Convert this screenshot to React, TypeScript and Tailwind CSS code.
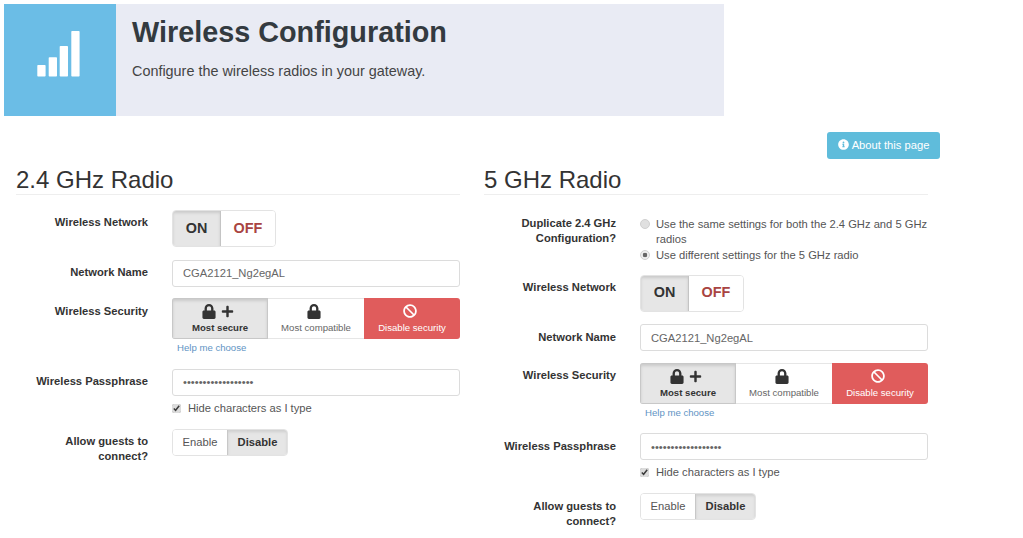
import { FaBan, FaInfoCircle, FaLock, FaPlus } from "react-icons/fa";

const Label = ({ children }: { children: React.ReactNode }) => (
  <label className="w-[132px] shrink-0 pt-[5.4px] text-right text-[11.2px] leading-[15px] font-bold text-[#333]">
    {children}
  </label>
);

const TextField = ({ value, type = "text" }: { value: string; type?: string }) => (
  <input
    type={type}
    value={value}
    readOnly
    className="h-[27px] w-[288px] rounded-[3px] border border-[#dcdcdc] bg-white px-[10px] text-[11.2px] text-[#666] outline-none"
  />
);

const RadioForm = ({ children }: { children?: React.ReactNode }) => (
  <form>
    {children}

    {/* on / off */}
    <div className="flex gap-6">
      <Label>Wireless Network</Label>
      <div className="flex h-[37px] w-[104px] overflow-hidden rounded-[4px] border border-[#e3e3e3] text-[14.4px] font-bold">
        <span className="flex w-[48px] items-center justify-center border-r border-[#c4c4c4] bg-[#e6e6e6] text-[#333] shadow-[inset_0_2px_3px_rgba(0,0,0,0.12)]">
          ON
        </span>
        <span className="flex flex-1 items-center justify-center bg-white text-[#a94442]">OFF</span>
      </div>
    </div>

    <div className="mt-[12.7px] flex gap-6">
      <Label>Network Name</Label>
      <TextField value="CGA2121_Ng2egAL" />
    </div>

    {/* security */}
    <div className="mt-[11.8px] flex gap-6">
      <Label>Wireless Security</Label>
      <div>
        <div className="flex h-[41px] w-[288px] overflow-hidden rounded-[3px] text-[9.6px] leading-[12px]">
          <div className="flex w-[96px] flex-col items-center border border-[#c8c8c8] bg-[#e6e6e6] pt-[3px] font-bold text-[#333] shadow-[inset_0_2px_3px_rgba(0,0,0,0.12)]">
            <span className="mr-[5px] flex h-[18px] items-center gap-[5px] text-[#333]">
              <FaLock className="h-[15px] w-[14px]" />
              <FaPlus className="h-[13px] w-[13px]" />
            </span>
            <span className="mt-[2px]">Most secure</span>
          </div>
          <div className="flex w-[96px] flex-col items-center border-y border-[#e6e6e6] bg-white pt-[3px] text-[#666]">
            <span className="mr-[5px] flex h-[18px] items-center text-[#333]">
              <FaLock className="h-[15px] w-[14px]" />
            </span>
            <span className="mt-[2px]">Most compatible</span>
          </div>
          <div className="flex w-[96px] flex-col items-center bg-[#e05c5c] pt-[4px] text-white">
            <span className="mr-[4px] flex h-[18px] items-center">
              <FaBan className="h-[14px] w-[14px]" />
            </span>
            <span className="mt-[2px]">Disable security</span>
          </div>
        </div>
        <a className="mt-[3px] ml-[5px] block text-[9.6px] leading-[12px] text-[#5f94c4]">Help me choose</a>
      </div>
    </div>

    <div className="mt-[14.3px] flex gap-6">
      <Label>Wireless Passphrase</Label>
      <div>
        <TextField type="password" value="abcdefghijklmnopqr" />
        <label className="mt-[5px] flex h-[15px] items-center gap-[7px] text-[11.2px] text-[#555]">
          <input type="checkbox" checked readOnly className="m-0 h-[9px] w-[9px] accent-[#dcdcdc]" />
          Hide characters as I type
        </label>
      </div>
    </div>

    <div className="mt-[13px] flex gap-6">
      <Label>
        Allow guests to
        <br />
        connect?
      </Label>
      <div className="flex h-[27px] w-[116px] overflow-hidden rounded-[4px] border border-[#e3e3e3] text-[11.2px]">
        <span className="flex w-[54px] items-center justify-center bg-white text-[#555]">Enable</span>
        <span className="flex flex-1 items-center justify-center border-l border-[#c8c8c8] bg-[#e6e6e6] font-bold text-[#333] shadow-[inset_0_2px_3px_rgba(0,0,0,0.1)]">
          Disable
        </span>
      </div>
    </div>
  </form>
);

export default function App() {
  return (
    <div className="h-[538px] overflow-hidden bg-white pt-1 font-['Liberation_Sans',Arial,sans-serif] text-[#333]">
      <header className="ml-1 flex h-[112px] w-[720px] bg-[#e9ebf4]">
        <div className="h-[112px] w-[112px] bg-[#6bbde6] pt-[27px] pl-[33px]">
          <svg width="43" height="46" viewBox="0 0 43 46" fill="#fff">
            <rect x="0.3" y="34" width="8.3" height="11.6" rx="0.8" />
            <rect x="11.7" y="26.3" width="8.3" height="19.3" rx="0.8" />
            <rect x="22.7" y="15" width="8.3" height="30.6" rx="0.8" />
            <rect x="34.3" y="0" width="8.3" height="45.6" rx="0.8" />
          </svg>
        </div>
        <div className="pl-4">
          <h1 className="mt-[10px] text-[28.8px] leading-[36px] font-bold text-[#333a40]">Wireless Configuration</h1>
          <p className="mt-[12px] text-[14.4px] leading-[18px] text-[#444]">Configure the wireless radios in your gateway.</p>
        </div>
      </header>

      <div className="mt-4 flex w-[940px] justify-end">
        <button className="flex h-[27px] w-[113px] items-center justify-center gap-[3px] rounded-[3px] bg-[#5fbcdb] text-[11.2px] text-white">
          <FaInfoCircle className="mb-[2px] h-[11px] w-[11px]" />
          About this page
        </button>
      </div>

      <div className="mt-[7px] ml-4 grid w-[912px] grid-cols-2 gap-6">
        <section>
          <h2 className="border-b border-[#eeeeee] pb-[1px] text-[24px] leading-[27px] text-[#333]">2.4 GHz Radio</h2>
          <div className="mt-[15px]">
            <RadioForm />
          </div>
        </section>
        <section>
          <h2 className="border-b border-[#eeeeee] pb-[1px] text-[24px] leading-[27px] text-[#333]">5 GHz Radio</h2>
          <div className="mt-[21.5px]">
            <RadioForm>
              <div className="mb-[11.6px] flex gap-6">
                <label className="-mt-[1px] w-[132px] shrink-0 text-right text-[11.2px] leading-[15px] font-bold text-[#333]">
                  Duplicate 2.4 GHz
                  <br />
                  Configuration?
                </label>
                <div className="w-[288px] text-[11.2px] leading-[15.5px] text-[#555]">
                  <label className="flex gap-[6px]">
                    <input
                      type="radio"
                      name="dup"
                      readOnly
                      className="m-0 mt-[2px] h-[10px] w-[10px] shrink-0 appearance-none rounded-full border border-[#d0d0d0] bg-[#e0e0e0]"
                    />
                    Use the same settings for both the 2.4 GHz and 5 GHz radios
                  </label>
                  <label className="flex gap-[6px]">
                    <input
                      type="radio"
                      name="dup"
                      defaultChecked
                      className="m-0 mt-[2px] h-[10px] w-[10px] shrink-0 appearance-none rounded-full border border-[#d0d0d0] bg-[radial-gradient(circle,#666_0,#666_2px,#eeeeee_2.6px)]"
                    />
                    Use different settings for the 5 GHz radio
                  </label>
                </div>
              </div>
            </RadioForm>
          </div>
        </section>
      </div>
    </div>
  );
}
